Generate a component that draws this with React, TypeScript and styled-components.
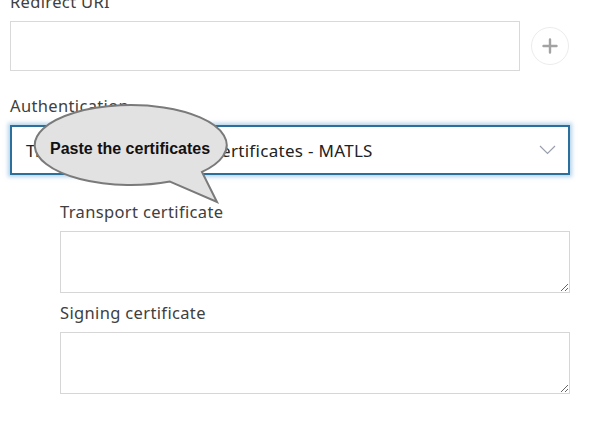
import React from 'react'
import styled, { createGlobalStyle } from 'styled-components'

const GlobalStyle = createGlobalStyle`
  html, body {
    margin: 0;
    padding: 0;
    background: #fff;
    overflow: hidden;
  }
  body {
    font-family: 'Noto Sans', 'Open Sans', sans-serif;
    color: #333;
  }
`

const Page = styled.div`
  position: relative;
  width: 600px;
  height: 423px;
  overflow: hidden;
`

const Form = styled.div`
  margin-top: -9px;
  padding-left: 10px;
  width: 560px;
  display: flex;
  flex-direction: column;
`

const Label = styled.label`
  display: block;
  font-size: 16.5px;
  letter-spacing: 0.35px;
  line-height: 22px;
  color: #404040;
  margin-bottom: 8px;
`

const Row = styled.div`
  display: flex;
  align-items: center;
  gap: 11px;
  margin-bottom: 24px;
`

const TextInput = styled.input`
  box-sizing: border-box;
  width: 510px;
  height: 50px;
  border: 1px solid #d9d9d9;
  outline: none;
  background: #fff;
`

const AddButton = styled.button`
  box-sizing: border-box;
  width: 38px;
  height: 38px;
  border-radius: 50%;
  border: 1px solid #ececec;
  background: #fff;
  display: flex;
  align-items: center;
  justify-content: center;
  padding: 0;
`

const Select = styled.div`
  box-sizing: border-box;
  height: 50px;
  width: 560px;
  border: 2px solid #2b6f9c;
  box-shadow: 0 0 4px 2px rgba(120, 175, 215, 0.55);
  display: flex;
  align-items: center;
  justify-content: space-between;
  padding: 0 12px 0 14px;
  font-size: 17px;
  letter-spacing: 0.3px;
  color: #222;
  margin-bottom: 26px;
`

const Nested = styled.div`
  margin-left: 50px;
  width: 510px;
  display: flex;
  flex-direction: column;
`

const TextArea = styled.textarea`
  box-sizing: border-box;
  display: block;
  width: 510px;
  height: 62px;
  border: 1px solid #d6d6d6;
  outline: none;
  margin-bottom: 9px;
  font-family: inherit;
`

const Callout = styled.div`
  position: absolute;
  left: 33px;
  top: 103px;
  width: 200px;
  height: 104px;
`

const CalloutText = styled.span`
  position: absolute;
  left: 17px;
  top: 37px;
  font-family: 'Liberation Sans', Arial, sans-serif;
  font-weight: bold;
  font-size: 16px;
  line-height: 18px;
  color: #111;
  white-space: nowrap;
`

const Plus = () => (
  <svg width='18' height='18' viewBox='0 0 18 18'>
    <path d='M9 2.5v13M2.5 9h13' stroke='#a3a3a3' strokeWidth='2.4' strokeLinecap='round' />
  </svg>
)

const Chevron = () => (
  <svg width='17' height='10' viewBox='0 0 17 10'>
    <path d='M1 1l7.5 7.5L16 1' stroke='#9a9fad' strokeWidth='1.2' fill='none' />
  </svg>
)

const Bubble = () => (
  <Callout>
    <svg width='200' height='104' viewBox='0 0 200 104'>
      <path
        d='M137 78.6 L184 99 L169 68.9 A96 40 0 1 0 137 78.6 Z'
        fill='#e2e2e2'
        stroke='#7a7a7a'
        strokeWidth='2'
        strokeLinejoin='miter'
      />
    </svg>
    <CalloutText>Paste the certificates</CalloutText>
  </Callout>
)

const App: React.FC = () => {
  return (
    <Page>
      <GlobalStyle />
      <Form>
        <Label>Redirect URI</Label>
        <Row>
          <TextInput />
          <AddButton>
            <Plus />
          </AddButton>
        </Row>

        <Label>Authentication</Label>
        <Select>
          <span>Transport and signing certificates - MATLS</span>
          <Chevron />
        </Select>

        <Nested>
          <Label>Transport certificate</Label>
          <TextArea />
          <Label>Signing certificate</Label>
          <TextArea />
        </Nested>
      </Form>
      <Bubble />
    </Page>
  )
}

export default App
